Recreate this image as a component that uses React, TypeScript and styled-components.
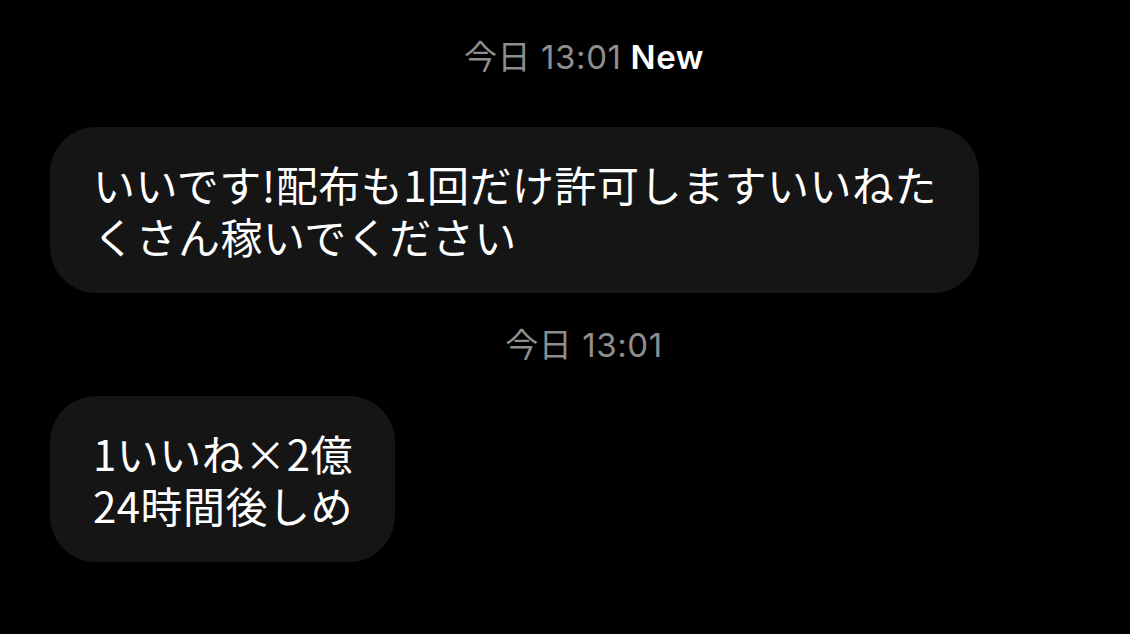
import styled, { createGlobalStyle } from 'styled-components'

const messages = [
  {
    time: '今日 13:01',
    isNew: true,
    lines: ['いいです!配布も1回だけ許可しますいいねた', 'くさん稼いでください'],
  },
  {
    time: '今日 13:01',
    isNew: false,
    lines: ['1いいね×2億', '24時間後しめ'],
  },
]

const GlobalStyle = createGlobalStyle`
  html, body {
    margin: 0;
    padding: 0;
    background: #000;
  }
`

const Page = styled.div`
  min-height: 634px;
  box-sizing: border-box;
  background: #000;
  padding: 37px 12px 0 50px;
  display: flex;
  flex-direction: column;
  font-family: 'Noto Sans CJK JP', 'Noto Sans', sans-serif;
`

const Group = styled.section`
  display: flex;
  flex-direction: column;
  align-items: flex-start;
  margin-bottom: 32px;
`

const Stamp = styled.div<{ $gap: number }>`
  align-self: stretch;
  text-align: center;
  font-family: 'Inter', 'Noto Sans CJK JP', sans-serif;
  font-size: 33px;
  line-height: 40px;
  letter-spacing: 0.6px;
  color: #8e8e8e;
  margin-bottom: ${(p) => p.$gap}px;
`

const NewMark = styled.span`
  color: #fff;
  font-weight: 600;
`

const Bubble = styled.div`
  background: #151515;
  color: #fff;
  border-radius: 46px;
  padding: 31px 42px 31px 43px;
  font-size: 42px;
  line-height: 52px;
  letter-spacing: 0.5px;
  white-space: nowrap;
`

function App() {
  return (
    <Page>
      <GlobalStyle />
      {messages.map((m, i) => (
        <Group key={i}>
          <Stamp $gap={m.isNew ? 50 : 31}>
            {m.time}
            {m.isNew && <NewMark> New</NewMark>}
          </Stamp>
          <Bubble>
            {m.lines.map((line, j) => (
              <span key={j}>
                {j > 0 && <br />}
                {line}
              </span>
            ))}
          </Bubble>
        </Group>
      ))}
    </Page>
  )
}

export default App
